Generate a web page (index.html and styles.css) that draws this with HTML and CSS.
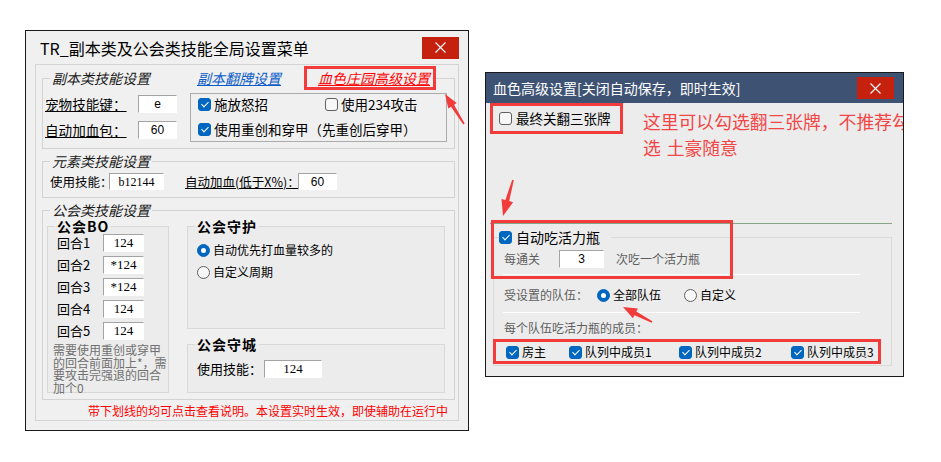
FILE: index.html
```html
<!DOCTYPE html>
<html lang="zh-CN">
<head>
    <meta charset="UTF-8">
    <title>技能设置</title>
    <link rel="stylesheet" href="styles.css">
</head>
<body>
    <!-- main settings window -->
    <div class="win win-main">
        <div class="titlebar">
            <span class="title">TR_副本类及公会类技能全局设置菜单</span>
            <span class="close"><svg width="11" height="11" viewBox="0 0 11 11"><path d="M0.5 0.5L10.5 10.5M10.5 0.5L0.5 10.5" stroke="#fff" stroke-width="1.1"/></svg></span>
        </div>
        <div class="panel">
            <fieldset class="group g-dungeon">
                <legend><span>副本类技能设置</span><a class="link link-flip">副本翻牌设置</a><a class="link link-blood">血色庄园高级设置</a></legend>
                <div class="dungeon-body">
                    <div class="key-list">
                        <div class="field"><span class="lbl u">宠物技能键：</span><span class="input sans">e</span></div>
                        <div class="field"><span class="lbl u">自动加血包：</span><span class="input sans">60</span></div>
                    </div>
                    <div class="check-box">
                        <label class="opt"><span class="cb on"></span>施放怒招</label>
                        <label class="opt"><span class="cb"></span>使用234攻击</label>
                        <label class="opt wide"><span class="cb on"></span>使用重创和穿甲（先重创后穿甲）</label>
                    </div>
                </div>
            </fieldset>

            <fieldset class="group g-elem">
                <legend>元素类技能设置</legend>
                <div class="field elem-row">
                    <span class="lbl lbl-skill">使用技能：</span><span class="input in-skill">b12144</span>
                    <span class="lbl lbl-heal u">自动加血(低于X%)：</span><span class="input in-heal sans">60</span>
                </div>
            </fieldset>

            <fieldset class="group g-guild">
                <legend>公会类技能设置</legend>
                <div class="guild-body">
                    <fieldset class="sub sub-bo">
                        <legend>公会BO</legend>
                        <div class="bo-rows">
                            <div class="field"><span class="lbl">回合1</span><span class="input">124</span></div>
                            <div class="field"><span class="lbl">回合2</span><span class="input">*124</span></div>
                            <div class="field"><span class="lbl">回合3</span><span class="input">*124</span></div>
                            <div class="field"><span class="lbl">回合4</span><span class="input">124</span></div>
                            <div class="field"><span class="lbl">回合5</span><span class="input">124</span></div>
                        </div>
                        <p class="bo-note">需要使用重创或穿甲<br>的回合前面加上*，需<br>要攻击完强退的回合<br>加个0</p>
                    </fieldset>
                    <div class="guild-side">
                        <fieldset class="sub sub-guard">
                            <legend>公会守护</legend>
                            <div class="radios">
                                <label class="opt small"><span class="rd on"></span>自动优先打血量较多的</label>
                                <label class="opt small"><span class="rd"></span>自定义周期</label>
                            </div>
                        </fieldset>
                        <fieldset class="sub sub-siege">
                            <legend>公会守城</legend>
                            <div class="field siege-row"><span class="lbl">使用技能：</span><span class="input">124</span></div>
                        </fieldset>
                    </div>
                </div>
            </fieldset>

            <p class="footer-note">带下划线的均可点击查看说明。本设置实时生效，即使辅助在运行中</p>
        </div>
    </div>

    <!-- blood castle advanced window -->
    <div class="win win-sub">
        <div class="titlebar dark">
            <span class="title">血色高级设置[关闭自动保存，即时生效]</span>
            <span class="close"><svg width="11" height="11" viewBox="0 0 11 11"><path d="M0.5 0.5L10.5 10.5M10.5 0.5L0.5 10.5" stroke="#fff" stroke-width="1.1"/></svg></span>
        </div>
        <div class="sub-body">
            <label class="opt last-cards"><span class="cb"></span>最终关翻三张牌</label>
            <div class="divider"></div>
            <fieldset class="potion">
                <legend><label class="opt"><span class="cb on"></span>自动吃活力瓶</label></legend>
                <div class="field pot-row">
                    <span class="lbl gray">每通关</span><span class="input sans">3</span><span class="gray after">次吃一个活力瓶</span>
                </div>
                <div class="sep"></div>
                <div class="field team-row">
                    <span class="lbl gray">受设置的队伍：</span>
                    <label class="opt small team-all"><span class="rd on"></span>全部队伍</label>
                    <label class="opt small"><span class="rd"></span>自定义</label>
                </div>
                <div class="sep sep-2"></div>
                <p class="gray member-title">每个队伍吃活力瓶的成员：</p>
                <div class="members">
                    <label class="opt small"><span class="cb on"></span>房主</label>
                    <label class="opt small"><span class="cb on"></span>队列中成员1</label>
                    <label class="opt small"><span class="cb on"></span>队列中成员2</label>
                    <label class="opt small"><span class="cb on"></span>队列中成员3</label>
                </div>
            </fieldset>
            <p class="hint">这里可以勾选翻三张牌，不推荐勾<br>选&#8198;&#8198;土豪随意</p>
        </div>
    </div>

    <!-- red markers drawn on top -->
    <svg class="marks" width="941" height="462" viewBox="0 0 941 462">
        <g fill="none" stroke="#f23c3c" stroke-width="3">
            <rect x="305.5" y="67.5" width="129" height="21"/>
            <rect x="491.5" y="104.5" width="130" height="28"/>
            <rect x="492.5" y="221.5" width="239" height="56"/>
            <rect x="494.5" y="340.5" width="385" height="22"/>
        </g>
        <g fill="#f23c3c">
            <polygon points="445,94 456.7,103.1 454,104.8 464.7,123.6 463.3,124.4 451,106.8 448.3,108.5"/>
            <polygon points="503,216 501.5,199 505.4,200.1 512.2,179.8 513.8,180.2 509.2,201.1 513.1,202.2"/>
            <polygon points="623,307 637.9,308.5 636.3,311.6 652.4,321.3 651.6,322.7 634.5,315.2 632.9,318.3"/>
        </g>
    </svg>
</body>
</html>
```

FILE: styles.css
```css
:root {
    --win-bg: #f0f0f0;
    --sub-bg: #ececec;
    --frame: #d3d3d3;
    --accent: #0067c0;
    --gray-text: #5e5e5e;
    --mark-red: #f24646;
}

* {
    margin: 0;
    padding: 0;
    box-sizing: border-box;
}

body {
    position: relative;
    width: 941px;
    height: 462px;
    overflow: hidden;
    background: #fff;
    font-family: "Noto Sans CJK SC", "Noto Sans", sans-serif;
    color: #000;
    font-size: 13px;
    line-height: 18px;
}

/* windows */
.win {
    position: absolute;
    display: flex;
    flex-direction: column;
    border: 1px solid #1a1a1a;
    background: var(--win-bg);
    overflow: hidden;
}

.win-main {
    left: 25px;
    top: 30px;
    width: 444px;
    height: 401px;
}

.win-sub {
    left: 485px;
    top: 72px;
    width: 419px;
    height: 305px;
}

.titlebar {
    display: flex;
    align-items: center;
    flex: none;
    height: 33px;
    padding-left: 14px;
}

.titlebar .title {
    font-size: 16px;
    line-height: 20px;
}

.titlebar.dark {
    height: 30px;
    padding-left: 7px;
    background: #3e5374;
    color: #fff;
}

.titlebar.dark .title {
    font-size: 14px;
}

.close {
    display: flex;
    align-items: center;
    justify-content: center;
    width: 37px;
    height: 22px;
    margin-left: auto;
    margin-right: 9px;
    background: #c6210f;
}

/* main panel */
.panel {
    height: 357px;
    margin: 0 9px;
    padding-top: 5px;
    border: 1px solid #d4d4d4;
}

.group {
    width: 413px;
    margin-left: 6px;
    padding: 0 0 6px 2px;
    border: 1px solid var(--frame);
    min-width: 0;
}

.group > legend {
    margin-left: 5px;
    padding: 0 2px;
    font-size: 14px;
    line-height: 16px;
    font-style: italic;
    color: #1a1a1a;
}

.link {
    text-decoration: underline;
    cursor: pointer;
}

.link-flip {
    margin-left: 47px;
    color: #0a5cc8;
}

.link-blood {
    margin-left: 37px;
    color: #f00;
}

.field {
    display: flex;
    align-items: center;
    height: 18px;
    white-space: nowrap;
}

.lbl {
    flex: none;
}

.u {
    text-decoration: underline;
}

.input {
    flex: none;
    height: 18px;
    background: #fff;
    border: 1px solid;
    border-color: #a3a3a3 #fff #fff #a3a3a3;
    text-align: center;
    font-family: "Liberation Serif", serif;
    font-size: 13px;
    line-height: 16px;
}

.input.sans {
    font-family: "Liberation Sans", sans-serif;
    font-size: 12px;
}

/* dungeon group */
.dungeon-body {
    display: flex;
    padding-top: 7px;
}

.key-list {
    display: flex;
    flex-direction: column;
    gap: 8px;
    padding-top: 2px;
}

.key-list .lbl {
    width: 93px;
    font-size: 13.6px;
}

.key-list .input {
    width: 39px;
}

.check-box {
    display: grid;
    grid-template-columns: 127px auto;
    align-content: start;
    row-gap: 7px;
    width: 257px;
    height: 49px;
    margin-left: 13px;
    padding: 1px 0 0 7px;
    border: 1px solid #ababab;
}

.opt {
    display: flex;
    align-items: center;
    gap: 3px;
    height: 18px;
    font-size: 13.5px;
    white-space: nowrap;
}

.opt.small {
    font-size: 12px;
}

.opt.wide {
    grid-column: 1 / 3;
}

/* checkbox and radio marks */
.cb,
.rd {
    position: relative;
    flex: none;
    width: 13px;
    height: 13px;
    border: 1px solid #5f5f5f;
    background: #f7f7f7;
}

.cb {
    border-radius: 3px;
}

.rd {
    border-radius: 50%;
}

.cb.on,
.rd.on {
    border-color: var(--accent);
    background: var(--accent);
}

.cb.on::after {
    content: "";
    position: absolute;
    left: 3.6px;
    top: 1.6px;
    width: 3px;
    height: 6px;
    border: solid #fff;
    border-width: 0 1.2px 1.2px 0;
    transform: rotate(45deg);
}

.rd.on::after {
    content: "";
    position: absolute;
    left: 3px;
    top: 3px;
    width: 5px;
    height: 5px;
    border-radius: 50%;
    background: #fff;
}

/* element group */
.g-elem {
    margin-top: 4px;
    padding-bottom: 7px;
}

.elem-row {
    height: 17px;
    margin-top: 4px;
    padding-left: 5px;
    font-size: 12.5px;
}

.elem-row .input {
    height: 17px;
    font-size: 12px;
}

.lbl-skill {
    width: 59px;
}

.in-skill {
    width: 55px;
}

.lbl-heal {
    width: 113px;
    margin-left: 21px;
}

.in-heal {
    width: 39px;
}

/* guild group */
.g-guild {
    margin-top: 4px;
}

.guild-body {
    display: flex;
    padding-left: 2px;
}

.sub {
    border: 1px solid #d8d8d8;
    background: var(--sub-bg);
    padding: 0;
    min-width: 0;
}

.sub > legend {
    margin-left: 7px;
    padding: 0 2px;
    font-size: 14px;
    line-height: 16px;
    font-weight: 700;
    letter-spacing: 1px;
}

.sub-bo {
    width: 122px;
    height: 175px;
}

.bo-rows {
    display: flex;
    flex-direction: column;
    gap: 4px;
    padding-left: 9px;
}

.bo-rows .lbl {
    width: 46px;
}

.bo-rows .input {
    width: 41px;
}

.bo-note {
    margin-top: 4px;
    padding-left: 5px;
    font-size: 12px;
    line-height: 12.5px;
    color: #707070;
    white-space: nowrap;
}

.guild-side {
    display: flex;
    flex-direction: column;
    width: 258px;
    margin-left: 18px;
}

.sub-guard {
    height: 111px;
}

.radios {
    display: flex;
    flex-direction: column;
    gap: 4px;
    padding: 7px 0 0 9px;
}

.sub-siege {
    height: 57px;
    margin-top: 7px;
}

.siege-row {
    margin-top: 8px;
    padding-left: 9px;
}

.siege-row .lbl {
    width: 67px;
}

.siege-row .input {
    width: 58px;
}

.footer-note {
    margin-top: 3px;
    padding-right: 10px;
    text-align: right;
    font-size: 12px;
    line-height: 16px;
    color: #f00;
}

/* blood castle window body */
.sub-body {
    position: relative;
    flex: 1;
    padding-top: 6px;
    background: var(--sub-bg);
}

.last-cards {
    margin-left: 13px;
    gap: 4px;
}

.divider {
    width: 402px;
    margin: 96px 0 0 4px;
    border-top: 1px solid #88a388;
}

.potion {
    width: 399px;
    height: 138px;
    margin: 4px 0 0 7px;
    padding: 0;
    border: 1px solid #d9d9d9;
    min-width: 0;
}

.potion > legend {
    margin-left: 5px;
    padding-right: 11px;
}

.potion > legend .opt {
    gap: 4px;
    font-size: 14px;
}

.gray {
    color: var(--gray-text);
    font-size: 12px;
}

.pot-row {
    margin-top: 4px;
    padding-left: 10px;
}

.pot-row .lbl {
    width: 55px;
}

.pot-row .input {
    width: 45px;
}

.pot-row .after {
    margin-left: 12px;
}

.sep {
    width: 357px;
    margin: 6px 0 0 9px;
    border-top: 1px solid #fff;
}

.sep-2 {
    margin-top: 8px;
}

.team-row {
    margin-top: 11px;
    padding-left: 10px;
}

.team-row .lbl {
    width: 93px;
}

.team-all {
    width: 87px;
}

.member-title {
    margin-top: 6px;
    padding-left: 10px;
    line-height: 18px;
}

.members {
    display: grid;
    grid-template-columns: 63px 110px 112px auto;
    margin-top: 6px;
    padding-left: 12px;
}

.hint {
    position: absolute;
    left: 157px;
    top: 5px;
    font-size: 17.8px;
    line-height: 26px;
    color: var(--mark-red);
    white-space: nowrap;
}

.marks {
    position: absolute;
    left: 0;
    top: 0;
    pointer-events: none;
}
```
